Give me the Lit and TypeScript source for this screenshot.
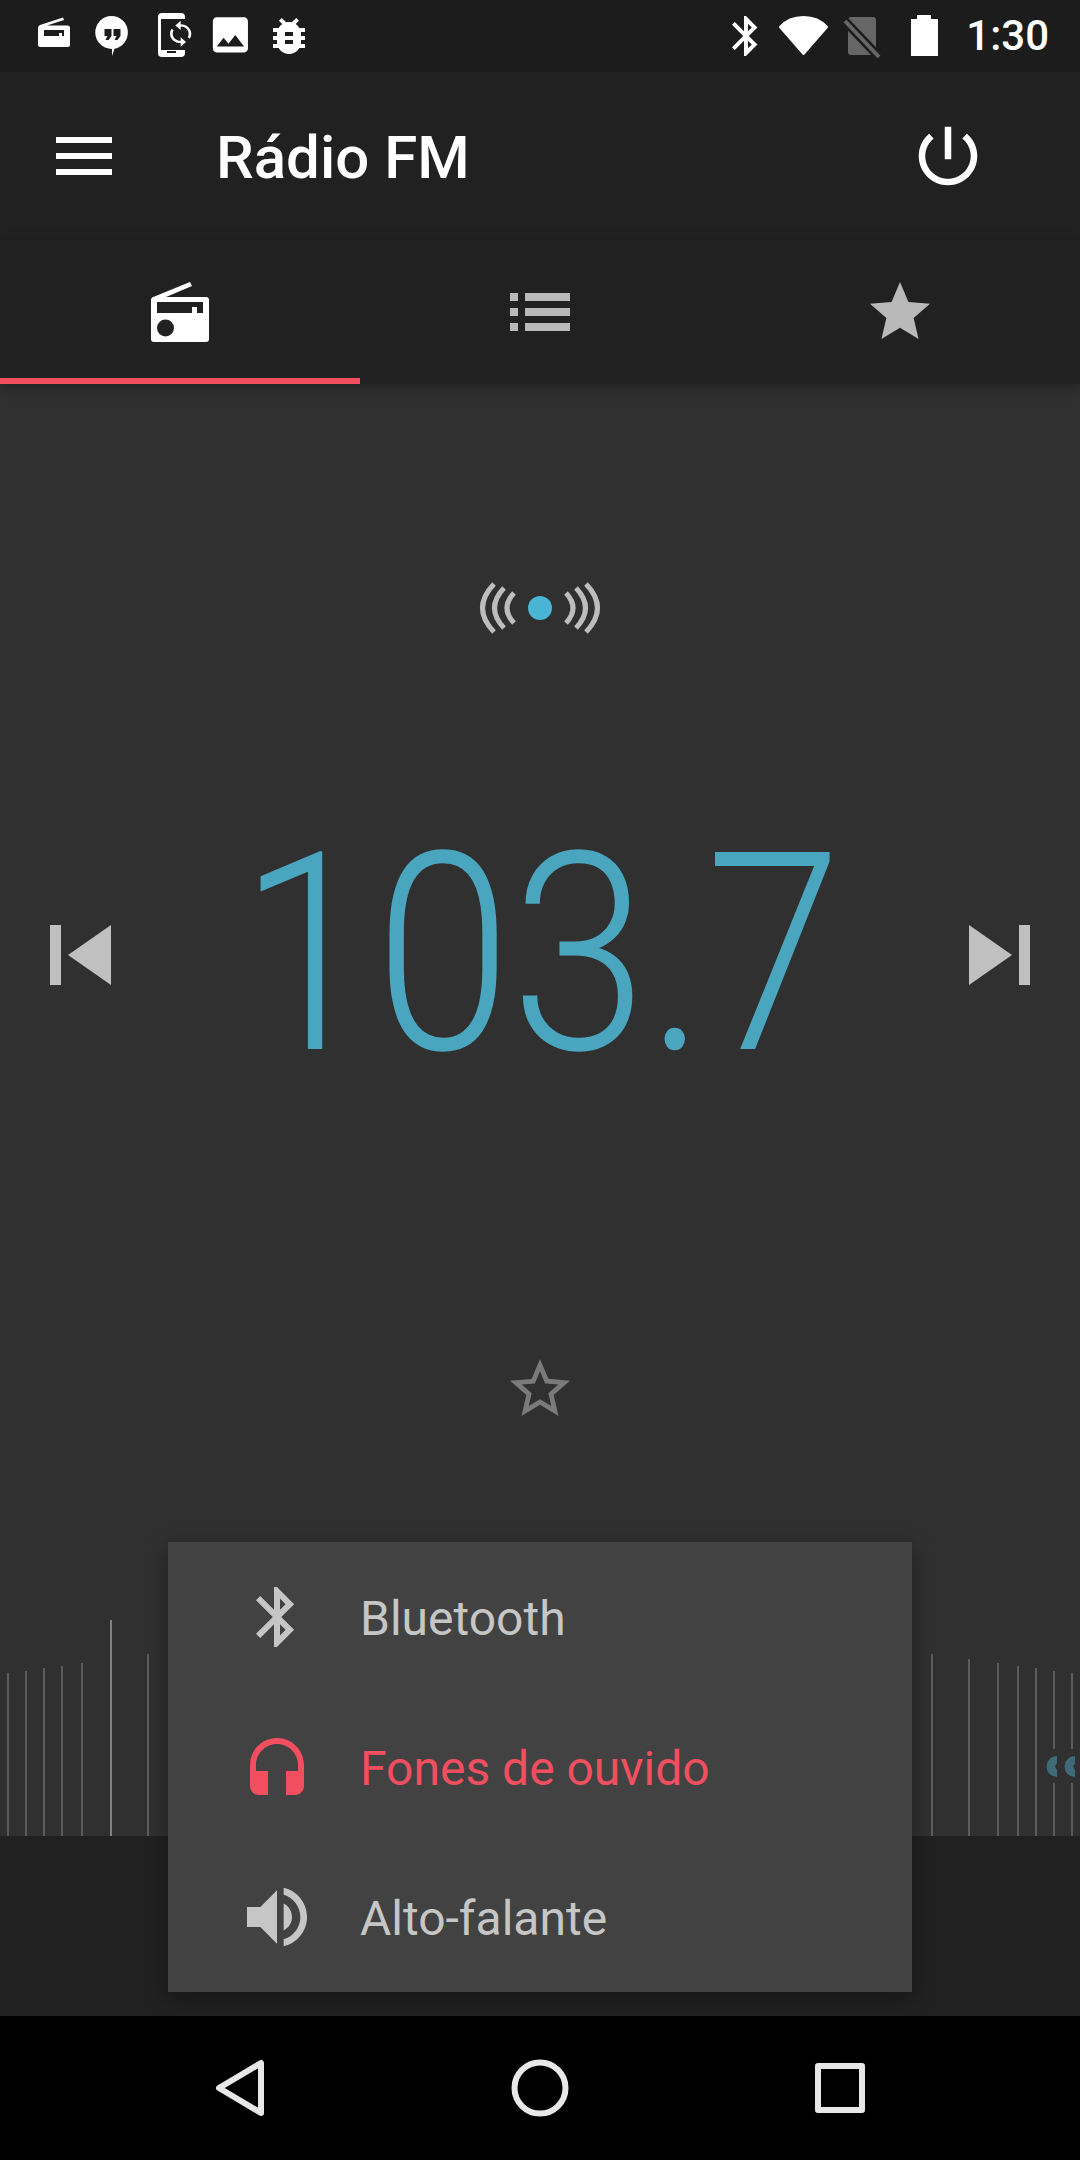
import { LitElement, html, css, svg } from 'lit';
import { customElement } from 'lit/decorators.js';

const ROBOTO = css`Roboto, "Noto Sans", sans-serif`;

const RADIO = 'M8 21.500 46 6 48 10 22 21H62Q65 21 65 24V63Q65 66 62 66H10Q7 66 7 63V24Q7 22.500 8 21.500ZM13 26V37H48V31H53V37H59V26ZM13 52a8.500 8.500 0 1 0 17 0a8.500 8.500 0 1 0-17 0Z';
const STAR = 'M12 17.27L18.18 21l-1.64-7.03L22 9.24l-7.19-.61L12 2 9.19 8.63 2 9.24l5.46 4.73L5.82 21z';
const STAR_BORDER = 'M22 9.24l-7.19-.62L12 2 9.19 8.63 2 9.24l5.46 4.73L5.82 21 12 17.27 18.18 21l-1.63-7.03L22 9.24zM12 15.4l-3.76 2.27 1-4.28-3.32-2.88 4.38-.38L12 6.1l1.71 4.04 4.38.38-3.32 2.88 1 4.28L12 15.4z';
const POWER = 'M13 3h-2v10h2V3zm4.83 2.17l-1.42 1.42C17.99 7.86 19 9.81 19 12c0 3.87-3.13 7-7 7s-7-3.13-7-7c0-2.19 1.01-4.14 2.58-5.42L6.17 5.17C4.23 6.82 3 9.26 3 12c0 4.97 4.03 9 9 9s9-4.03 9-9c0-2.74-1.23-5.18-3.17-6.83z';
const BLUETOOTH = 'M17.71 7.71L12 2h-1v7.59L6.41 5 5 6.41 10.59 12 5 17.59 6.41 19 11 14.41V22h1l5.71-5.71-4.3-4.29 4.3-4.29zM13 5.83l1.88 1.88L13 9.59V5.83zm1.88 10.46L13 18.17v-3.76l1.88 1.88z';
const HEADSET = 'M12 1c-4.97 0-9 4.03-9 9v7c0 1.66 1.34 3 3 3h3v-8H5v-2c0-3.87 3.13-7 7-7s7 3.13 7 7v2h-4v8h3c1.66 0 3-1.34 3-3v-7c0-4.97-4.03-9-9-9z';
const VOLUME = 'M3 9v6h4l5 5V4L7 9H3zm13.5 3c0-1.77-1.02-3.29-2.5-4.03v8.05c1.48-.73 2.5-2.25 2.5-4.02zM14 3.23v2.06c2.89.86 5 3.54 5 6.71s-2.11 5.85-5 6.71v2.06c4.01-.91 7-4.49 7-8.77s-2.99-7.86-7-8.77z';
const SYNC = 'M12 4V1L8 5l4 4V6c3.31 0 6 2.69 6 6 0 1.01-.25 1.97-.7 2.8l1.46 1.46C19.54 15.03 20 13.57 20 12c0-4.42-3.58-8-8-8zm0 14c-3.31 0-6-2.69-6-6 0-1.01.25-1.97.7-2.8L5.24 7.74C4.46 8.97 4 10.43 4 12c0 4.42 3.58 8 8 8v3l4-4-4-4v3z';
const IMAGE = 'M21 19V5c0-1.1-.9-2-2-2H5c-1.1 0-2 .9-2 2v14c0 1.1.9 2 2 2h14c1.1 0 2-.9 2-2zM8.5 13.5l2.5 3.01L14.5 12l4.5 6H5l3.5-4.5z';
const BUG = 'M20 8h-2.81c-.45-.78-1.07-1.45-1.82-1.96L17 4.41 15.59 3l-2.17 2.17C12.96 5.06 12.49 5 12 5c-.49 0-.96.06-1.41.17L8.41 3 7 4.41l1.62 1.63C7.88 6.55 7.26 7.22 6.81 8H4v2h2.09c-.05.33-.09.66-.09 1v1H4v2h2v1c0 .34.04.67.09 1H4v2h2.81c1.04 1.79 2.97 3 5.19 3s4.15-1.21 5.19-3H20v-2h-2.09c.05-.33.09-.66.09-1v-1h2v-2h-2v-1c0-.34-.04-.67-.09-1H20V8zm-6 8h-4v-2h4v2zm0-4h-4v-2h4v2z';

// x, top and bottom of each tuning tick, relative to the strip (top = y 1620)
const TICKS: { x: number; top: number; bottom?: number; bright?: boolean }[] = [
  { x: 7, top: 53 }, { x: 25, top: 51 }, { x: 43, top: 48 }, { x: 61, top: 46 }, { x: 81, top: 43 },
  { x: 110, top: 0, bright: true }, { x: 147, top: 34 },
  { x: 931, top: 34 }, { x: 968, top: 39 }, { x: 997, top: 43 }, { x: 1017, top: 46 }, { x: 1035, top: 48 },
  { x: 1053, top: 51, bottom: 129 }, { x: 1053, top: 163 },
  { x: 1071, top: 53, bottom: 129 }, { x: 1071, top: 163 },
];

const OUTPUTS = [
  { label: 'Bluetooth', path: BLUETOOTH, size: 72, active: false },
  { label: 'Fones de ouvido', path: HEADSET, size: 72, active: true },
  { label: 'Alto-falante', path: VOLUME, size: 80, active: false },
];

const icon = (d: string, size = 72) => html`<svg class="icon" width=${size} height=${size} viewBox="0 0 24 24"><path d=${d}></path></svg>`;

@customElement('app-root')
export class AppRoot extends LitElement {
  static styles = css`
    :host {
      display: flex;
      flex-direction: column;
      width: 1080px;
      height: 2160px;
      background: #303030;
      font-family: ${ROBOTO};
      overflow: hidden;
    }
    svg { display: block; flex: none; }
    .icon { fill: currentColor; }

    .status {
      height: 72px;
      background: #1c1c1c;
      display: flex;
      justify-content: space-between;
      align-items: center;
      color: #fff;
    }
    .status-right { display: flex; align-items: center; }
    .time {
      font-size: 42px;
      font-weight: 500;
      padding: 0 31px 0 18px;
      line-height: 72px;
    }

    .toolbar {
      height: 168px;
      background: #212121;
      display: flex;
      align-items: center;
      color: #fff;
      padding: 0 93px 0 56px;
    }
    .menu { fill: #fff; }
    .title {
      flex: 1;
      font-size: 60px;
      font-weight: 500;
      padding: 2px 0 0 104px;
    }

    .tabs {
      height: 144px;
      background: #212121;
      display: flex;
      position: relative;
      z-index: 1;
      box-shadow: 0 4px 12px rgba(0, 0, 0, .3);
    }
    .tab {
      flex: 1;
      display: flex;
      align-items: center;
      justify-content: center;
      color: #b9b9b9;
      box-sizing: border-box;
      padding-top: 6px;
      border-bottom: 6px solid transparent;
    }
    .tab.active { color: #fff; border-bottom-color: #f14f5f; }
    .tab-glyph { fill: currentColor; }

    .main {
      flex: 1;
      position: relative;
      display: flex;
      flex-direction: column;
      align-items: center;
      padding-top: 192px;
    }
    .signal { fill: none; stroke: #bdbdbd; stroke-width: 5; }
    .tuner {
      align-self: stretch;
      height: 300px;
      margin-top: 165px;
      padding: 0 44px;
      display: flex;
      align-items: center;
      justify-content: space-between;
    }
    .skip { fill: #c0c0c0; }
    .freq {
      font-size: 277px;
      font-weight: 300;
      line-height: 300px;
      color: #4aa5bf;
      transform: scaleX(.885);
    }
    .fav { margin-top: 248px; color: #7a7a7a; }

    .strip {
      margin-top: auto;
      align-self: stretch;
      height: 216px;
      position: relative;
    }
    .tick {
      position: absolute;
      width: 2px;
      background: #5c5c5c;
    }
    .tick.bright { background: #808080; }
    .marks { position: absolute; left: 1040px; top: 130px; fill: #3f6b79; }
    .footer { align-self: stretch; height: 180px; background: #212121; }

    .popup {
      position: absolute;
      left: 168px;
      top: 1158px;
      width: 744px;
      height: 450px;
      background: #424242;
      box-shadow: 0 6px 20px rgba(0, 0, 0, .35);
    }
    .item {
      height: 150px;
      display: flex;
      align-items: center;
      color: #c6c6c6;
      font-size: 48px;
    }
    .item span { padding-top: 2px; }
    .item.active { color: #f14f5f; }
    .item.active .icon { margin-top: 8px; }
    .item-icon {
      width: 192px;
      padding-left: 26px;
      box-sizing: border-box;
      display: flex;
      justify-content: center;
      color: inherit;
    }

    .nav {
      height: 144px;
      background: #000;
    }
    .nav svg { fill: none; stroke: #e8e8e8; stroke-width: 6; stroke-linejoin: round; }
  `;

  private statusLeft() {
    return svg`
      <svg width="330" height="72" viewBox="0 0 330 72" fill="#fff">
        <path fill-rule="evenodd" d="M40 25 63 17.5 64 20 47 25.5H67.5Q70 25.5 70 28V44.5Q70 47 67.5 47H40.5Q38 47 38 44.5V28Q38 26 40 25ZM44 30V36H62V33H59V36H64V30Z"></path>
        <path d="M111.5 16a16.5 16.5 0 0 1 3 32.7L112 56V49a16.5 16.5 0 0 1-.5-33z"></path>
        <path fill="#1c1c1c" d="M104.500 29h7v7l-3 4h-3l2-4h-3zM113.500 29h7v7l-3 4h-3l2-4h-3z"></path>
        <rect x="158" y="13" width="27" height="44" rx="4"></rect>
        <rect x="161" y="19" width="30" height="31" fill="#1c1c1c"></rect>
        <rect x="167" y="51" width="9" height="2" fill="#1c1c1c"></rect>
        <path transform="translate(164.700 19.500) scale(1.33 1.18)" d=${SYNC}></path>
        <path transform="translate(207 11.500) scale(1.95)" fill-rule="evenodd" d=${IMAGE}></path>
        <path transform="translate(265 12) scale(2)" d=${BUG}></path>
      </svg>`;
  }

  private statusIcons() {
    return svg`
      <svg width="228" height="72" viewBox="720 0 228 72" fill="#fff">
        <path transform="translate(722 12) scale(2)" d=${BLUETOOTH}></path>
        <path stroke="#fff" stroke-width="2" stroke-linejoin="round" d="M803.500 54 780 27C786 20 795 17 803.500 17S821 20 827 27Z"></path>
        <path fill="#666" d="M851 17H873Q876 17 876 20V55H851Q848 55 848 52V20Q848 17 851 17Z"></path>
        <path stroke="#1c1c1c" stroke-width="9" d="M842 18 880 58"></path>
        <path stroke="#666" stroke-width="4" d="M845 21 879 57"></path>
        <path d="M917 15H931V19H938V56H911V19H917Z"></path>
      </svg>`;
  }

  render() {
    return html`
      <div class="status">
        ${this.statusLeft()}
        <div class="status-right">
          ${this.statusIcons()}
          <span class="time">1:30</span>
        </div>
      </div>

      <div class="toolbar">
        <svg class="menu" width="56" height="38" viewBox="0 0 56 38">
          <rect width="56" height="6"></rect>
          <rect y="16" width="56" height="6"></rect>
          <rect y="32" width="56" height="6"></rect>
        </svg>
        <div class="title">Rádio FM</div>
        ${icon(POWER, 78)}
      </div>

      <div class="tabs">
        <div class="tab active">
          <svg class="tab-glyph" width="72" height="72" viewBox="0 0 72 72">
            <path fill-rule="evenodd" d=${RADIO}></path>
          </svg>
        </div>
        <div class="tab">
          <svg class="tab-glyph" width="72" height="72" viewBox="0 0 72 72">
            <rect x="6" y="17" width="8" height="8"></rect>
            <rect x="6" y="32" width="8" height="8"></rect>
            <rect x="6" y="47" width="8" height="8"></rect>
            <rect x="21" y="17" width="45" height="8"></rect>
            <rect x="21" y="32" width="45" height="8"></rect>
            <rect x="21" y="47" width="45" height="8"></rect>
          </svg>
        </div>
        <div class="tab">${icon(STAR)}</div>
      </div>

      <div class="main">
        <svg class="signal" width="128" height="64" viewBox="476 576 128 64">
          <path d="M514 593Q500 608 514 623M504 588Q485 608 504 628M494 584Q471 608 494 632"></path>
          <path d="M566 593Q580 608 566 623M576 588Q595 608 576 628M586 584Q609 608 586 632"></path>
          <circle cx="540" cy="608" r="12" fill="#4ab4d4" stroke="none"></circle>
        </svg>

        <div class="tuner">
          <svg class="skip" width="72" height="72" viewBox="0 0 72 72">
            <rect x="6" y="6" width="11" height="60"></rect>
            <path d="M67 6V66L24 36Z"></path>
          </svg>
          <div class="freq">103.7</div>
          <svg class="skip" width="72" height="72" viewBox="0 0 72 72">
            <rect x="55" y="6" width="11" height="60"></rect>
            <path d="M5 6V66L48 36Z"></path>
          </svg>
        </div>

        <div class="fav">${icon(STAR_BORDER)}</div>

        <div class="strip">
          ${TICKS.map(t => html`<div class="tick ${t.bright ? 'bright' : ''}" style="left:${t.x}px;top:${t.top}px;height:${(t.bottom ?? 216) - t.top}px"></div>`)}
          <svg class="marks" width="40" height="32" viewBox="0 0 40 32">
            <path d="M17 6A10.500 10.500 0 0 0 17 27V20L15 16.500 17 13Z"></path>
            <path d="M35 6A10.500 10.500 0 0 0 35 27V20L33 16.500 35 13Z"></path>
          </svg>
        </div>
        <div class="footer"></div>

        <div class="popup">
          ${OUTPUTS.map(o => html`
            <div class="item ${o.active ? 'active' : ''}">
              <div class="item-icon">${icon(o.path, o.size)}</div>
              <span>${o.label}</span>
            </div>`)}
        </div>
      </div>

      <div class="nav">
        <svg width="1080" height="144" viewBox="0 2016 1080 144">
          <path d="M261 2063V2113L219 2088Z"></path>
          <circle cx="540" cy="2088" r="25.500"></circle>
          <rect x="818" y="2066" width="44" height="44"></rect>
        </svg>
      </div>
    `;
  }
}
